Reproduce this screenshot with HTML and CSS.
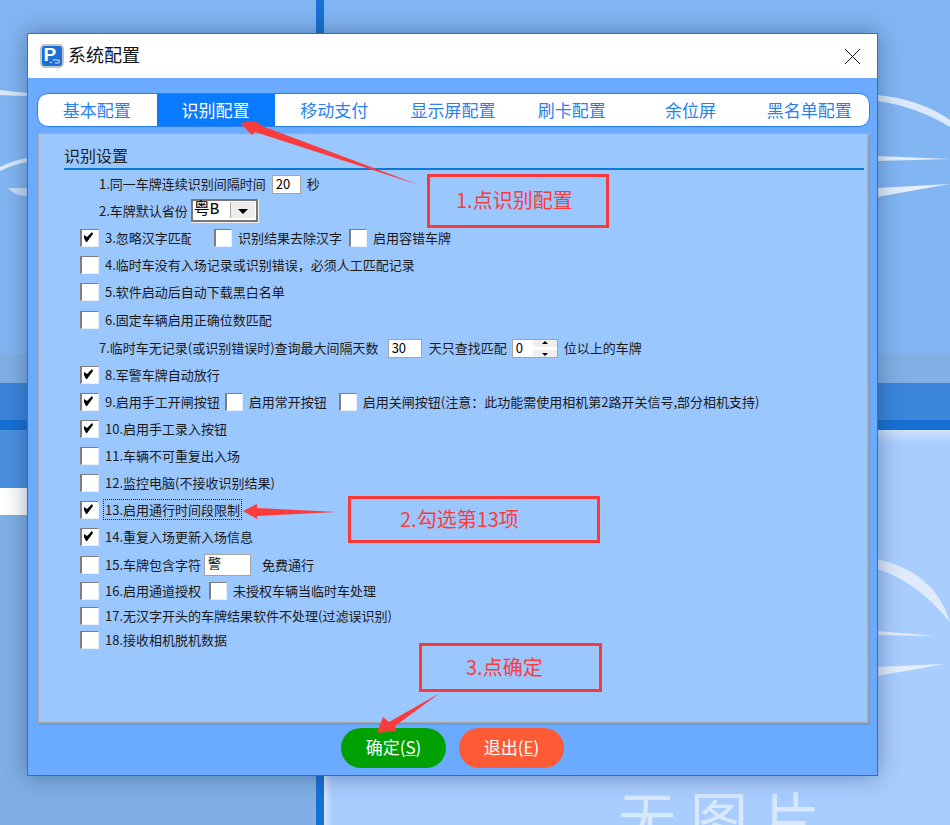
FILE: index.html
```html
<!DOCTYPE html>
<html lang="zh-CN">
<head>
    <meta charset="utf-8">
    <title>系统配置</title>
    <link rel="stylesheet" href="styles.css">
</head>
<body>

    <div class="desktop">
        <div class="back-col back-left">
            <div class="band band-sky"></div>
            <div class="band band-pale"></div>
            <div class="band band-blue"></div>
            <div class="band band-deep"></div>
            <div class="band band-mid"></div>
            <div class="band band-white"></div>
            <div class="band band-rest"></div>
        </div>
        <div class="back-bar"></div>
        <div class="back-col back-right">
            <div class="band band-sky"></div>
            <div class="band band-pale"></div>
            <div class="band band-blue"></div>
            <div class="band band-deep"></div>
            <div class="band band-light"></div>
        </div>
    </div>

    <svg class="streaks" width="950" height="825" viewBox="0 0 950 825">
        <path d="M0 90 Q14 92 28 93 L28 96 Q14 96 0 95 Z" fill="#dbe9fb"/>
        <path d="M0 167 Q14 160 28 158 L28 162 Q14 164 0 171 Z" fill="#dbe9fb"/>
        <path d="M8 188 L28 188 L28 196 Q16 197 8 188 Z" fill="#c6dcf8"/>
        <path d="M877 95 Q920 99 950 120 L950 127 Q915 106 877 101 Z" fill="#dce9fb"/>
        <path d="M877 156 L950 159 L877 161 Z" fill="#e4eefc"/>
        <path d="M877 188 L950 184 L877 197 Z" fill="#e4eefc"/>
        <path d="M877 559 Q935 572 950 622 Q915 580 877 569 Z" fill="#dfebfc"/>
        <path d="M877 631 L937 636 L877 635 Z" fill="#e4eefc"/>
        <path d="M877 667 L945 664 L877 676 Z" fill="#e4eefc"/>
    </svg>
    <div class="no-image">无图片</div>

    <div class="dialog">
        <div class="title-bar">
            <svg class="logo" width="24" height="24" viewBox="0 0 24 24">
                <rect x="1" y="1" width="22" height="22" rx="4" fill="#1b6fd6" stroke="#c4c4c4" stroke-width="2"/>
                <text x="3.5" y="17" class="logo-letter">P</text>
                <path d="M10 18.5 h2 M13 16 h6 q1 1 0 3 h-4" fill="none" stroke="#d5e6fb" stroke-width="1"/>
            </svg>
            <span class="title-text">系统配置</span>
            <svg class="close-icon" width="17" height="17" viewBox="0 0 17 17">
                <path d="M1 1 L16 16 M16 1 L1 16" stroke="#111" stroke-width="1" fill="none"/>
            </svg>
        </div>

        <div class="tabs">
            <div class="tab">基本配置</div>
            <div class="tab active">识别配置</div>
            <div class="tab">移动支付</div>
            <div class="tab">显示屏配置</div>
            <div class="tab">刷卡配置</div>
            <div class="tab">余位屏</div>
            <div class="tab">黑名单配置</div>
        </div>

        <div class="panel">
            <div class="panel-title">识别设置</div>

            <div class="row row-plain">
                <span>1.同一车牌连续识别间隔时间</span>
                <span class="field field-sec">20</span>
                <span>秒</span>
            </div>
            <div class="row row-plain">
                <span>2.车牌默认省份</span>
                <span class="select"><span class="select-value">粤B</span><span class="select-btn"></span></span>
            </div>
            <div class="row">
                <span class="cb checked"></span><span class="clipped">3.忽略汉字匹配</span>
                <span class="cb cb-small push-17"></span><span>识别结果去除汉字</span>
                <span class="cb cb-small push-1"></span><span>启用容错车牌</span>
            </div>
            <div class="row"><span class="cb"></span><span>4.临时车没有入场记录或识别错误，必须人工匹配记录</span></div>
            <div class="row"><span class="cb"></span><span>5.软件启动后自动下载黑白名单</span></div>
            <div class="row row-gap-4"><span class="cb"></span><span>6.固定车辆启用正确位数匹配</span></div>
            <div class="row row-plain row-gap-4">
                <span>7.临时车无记录(或识别错误时)查询最大间隔天数</span>
                <span class="field field-days">30</span>
                <span>天只查找匹配</span>
                <span class="spinner">0<span class="spin-btns"><span class="spin-up"></span><span class="spin-down"></span></span></span>
                <span>位以上的车牌</span>
            </div>
            <div class="row"><span class="cb checked"></span><span>8.军警车牌自动放行</span></div>
            <div class="row">
                <span class="cb checked"></span><span>9.启用手工开闸按钮</span>
                <span class="cb cb-small push-n1"></span><span>启用常开按钮</span>
                <span class="cb cb-small push-6"></span><span>启用关闸按钮(注意：此功能需使用相机第2路开关信号,部分相机支持)</span>
            </div>
            <div class="row"><span class="cb checked"></span><span>10.启用手工录入按钮</span></div>
            <div class="row"><span class="cb"></span><span>11.车辆不可重复出入场</span></div>
            <div class="row"><span class="cb"></span><span>12.监控电脑(不接收识别结果)</span></div>
            <div class="row"><span class="cb checked"></span><span class="focused">13.启用通行时间段限制</span></div>
            <div class="row"><span class="cb checked"></span><span>14.重复入场更新入场信息</span></div>
            <div class="row row-gap-4">
                <span class="cb"></span><span>15.车牌包含字符</span>
                <span class="field field-char">警</span>
                <span>免费通行</span>
            </div>
            <div class="row row-gap-2">
                <span class="cb"></span><span>16.启用通道授权</span>
                <span class="cb cb-small push-2"></span><span>未授权车辆当临时车处理</span>
            </div>
            <div class="row row-gap-1"><span class="cb"></span><span>17.无汉字开头的车牌结果软件不处理(过滤误识别)</span></div>
            <div class="row row-gap-0"><span class="cb"></span><span>18.接收相机脱机数据</span></div>
        </div>

        <div class="footer">
            <button class="btn btn-ok">确定(<u>S</u>)</button>
            <button class="btn btn-exit">退出(<u>E</u>)</button>
        </div>
    </div>

    <div class="note note-one">1.点识别配置</div>
    <div class="note note-two">2.勾选第13项</div>
    <div class="note note-three">3.点确定</div>

    <svg class="arrows" width="950" height="825" viewBox="0 0 950 825">
        <polygon points="240,123 255,121 262,126 419,185 255,132 252,135"/>
        <polygon points="243,511 257,504 257,508 337,512 257,516 257,519"/>
        <polygon points="377,733 383,717 389,722 440,693 395,726 396,731"/>
    </svg>

</body>
</html>
```

FILE: styles.css
```css
* {
    box-sizing: border-box;
}

body {
    margin: 0;
    width: 950px;
    height: 825px;
    overflow: hidden;
    position: relative;
    font-family: "Noto Sans CJK SC", "Noto Sans", sans-serif;
    font-size: 13px;
    color: #1a1a1a;
    background: #82b6f2;
}

/* windows behind the dialog */
.desktop {
    position: absolute;
    inset: 0;
    display: flex;
}

.back-col {
    display: flex;
    flex-direction: column;
}

.back-left {
    width: 316px;
}

.back-right {
    flex: 1;
}

.back-bar {
    width: 8px;
    background: #1670d3;
}

.band-sky {
    height: 353px;
    background: #82b6f2;
}

.band-pale {
    height: 30px;
    background: #80b0e4;
}

.band-blue {
    height: 37px;
    background: #3b85db;
}

.band-deep {
    height: 10px;
    background: #1670d3;
}

.band-mid {
    height: 58px;
    background: #4a90de;
}

.band-white {
    height: 27px;
    background: #ffffff;
}

.band-rest {
    flex: 1;
    background: #7fafe4;
}

.band-light {
    flex: 1;
    background:
        linear-gradient(90deg, #d6e6fd 0, rgba(214, 230, 253, 0) 8px),
        linear-gradient(180deg, #cfe2fd 0, #a9cdff 14px);
}

.streaks {
    position: absolute;
    left: 0;
    top: 0;
}

.no-image {
    position: absolute;
    left: 618px;
    top: 776px;
    font-size: 58px;
    letter-spacing: 14px;
    line-height: 80px;
    color: #d8e8fd;
}

/* dialog */
.dialog {
    position: absolute;
    left: 27px;
    top: 33px;
    width: 851px;
    height: 743px;
    display: flex;
    flex-direction: column;
    background: #6aabff;
    border: 1px solid #4d6a8d;
    box-shadow: 0 0 22px rgba(30, 50, 90, 0.45);
}

.title-bar {
    height: 44px;
    flex: none;
    display: flex;
    align-items: center;
    padding: 0 16px 0 12px;
    background: #ffffff;
}

.logo {
    flex: none;
}

.logo-letter {
    font-family: "Liberation Sans", sans-serif;
    font-size: 19px;
    font-weight: 700;
    fill: #ffffff;
}

.title-text {
    margin-left: 4px;
    padding-bottom: 4px;
    font-size: 18px;
    color: #111;
}

.close-icon {
    margin-left: auto;
}

.tabs {
    display: flex;
    flex: none;
    height: 34px;
    width: 833px;
    margin: 15px 0 0 9px;
    overflow: hidden;
    background: #ffffff;
    border: 1px solid #2a7ff0;
    border-radius: 11px;
}

.tab {
    flex: 1;
    display: flex;
    align-items: center;
    justify-content: center;
    padding: 0 1px 2px 0;
    font-size: 17px;
    color: #2a80f0;
}

.tab.active {
    background: #0a7aff;
    color: #ffffff;
}

.panel {
    flex: none;
    width: 831px;
    height: 590px;
    margin: 6px 0 0 10px;
    background: #9bc7ff;
    border: 1px solid #a8a8a8;
    border-right-width: 2px;
    box-shadow: 1px 2px 0 #5f9fee;
}

.panel-title {
    height: 36px;
    margin: 0 3px 0 25px;
    padding-top: 9px;
    font-size: 16px;
    line-height: 24px;
    color: #222;
    border-bottom: 2px solid #0b78d8;
}

.row {
    display: flex;
    align-items: center;
    gap: 6px;
    height: 24px;
    margin-top: 3px;
    padding: 0 0 4px 41px;
    white-space: nowrap;
}

.row-plain {
    padding-left: 60px;
}

.row-gap-4 {
    margin-top: 4px;
}

.row-gap-2 {
    margin-top: 2px;
}

.row-gap-1 {
    margin-top: 1px;
}

.row-gap-0 {
    margin-top: 0;
}

.clipped {
    width: 86px;
    overflow: hidden;
}

/* checkbox with the sunken look of the old control */
.cb {
    position: relative;
    flex: none;
    width: 19px;
    height: 18px;
    margin-top: 2px;
    background: #ffffff;
    border-top: 1px solid #7e7e7e;
    border-left: 2px solid #7e7e7e;
    border-right: 1px solid #e6eefb;
    border-bottom: 1px solid #e6eefb;
}

.cb-small {
    width: 18px;
}

.cb.checked::after {
    content: "";
    position: absolute;
    inset: 0;
    background: #000;
    clip-path: polygon(2px 5px, 5px 7px, 10px 2px, 11px 4px, 5px 12px, 4px 12px, 2px 8px);
}

.push-17 {
    margin-left: 17px;
}

.push-6 {
    margin-left: 6px;
}

.push-2 {
    margin-left: 2px;
}

.push-1 {
    margin-left: 1px;
}

.push-n1 {
    margin-left: -1px;
}

.focused {
    margin-left: -1px;
    padding: 0 1px;
    outline: 1px dotted #222;
}

.field {
    flex: none;
    height: 19px;
    margin-top: 2px;
    padding-left: 3px;
    line-height: 16px;
    background: #ffffff;
    border: 1px solid #a4a4a4;
    color: #000;
}

.field-sec {
    width: 29px;
}

.field-days {
    width: 34px;
    margin: 2px 1px 0 3px;
}

.field-char {
    width: 47px;
    height: 22px;
    margin: 2px 5px 0 -3px;
}

.select {
    display: flex;
    width: 68px;
    height: 24px;
    margin: 2px 0 0 -3px;
    background: #ffffff;
    border-right: 1px solid #f2f2f2;
    border-bottom: 1px solid #f2f2f2;
    box-shadow: inset 0 0 0 2px #777;
}

.select-value {
    flex: 1;
    padding: 1px 0 0 3px;
    font-family: "Liberation Mono", "Noto Sans CJK SC", monospace;
    font-size: 16px;
    line-height: 20px;
    color: #000;
}

.select-btn {
    position: relative;
    width: 25px;
    margin: 3px 3px 4px 0;
    background: #ececec;
    border-left: 1px solid #aaa;
}

.select-btn::after {
    content: "";
    position: absolute;
    left: 7px;
    top: 7px;
    border-left: 5px solid transparent;
    border-right: 5px solid transparent;
    border-top: 5px solid #000;
}

.spinner {
    flex: none;
    display: flex;
    justify-content: space-between;
    width: 46px;
    height: 19px;
    margin: 2px 0 0 -1px;
    padding-left: 3px;
    line-height: 16px;
    background: #ffffff;
    border: 1px solid #a4a4a4;
    color: #000;
}

.spin-btns {
    display: flex;
    flex-direction: column;
    justify-content: space-between;
    width: 24px;
}

.spin-up,
.spin-down {
    position: relative;
    height: 7px;
    background: #efefef;
}

.spin-up::after,
.spin-down::after {
    content: "";
    position: absolute;
    left: 9px;
    border-left: 3px solid transparent;
    border-right: 3px solid transparent;
}

.spin-up::after {
    top: 1px;
    border-bottom: 3px solid #000;
}

.spin-down::after {
    top: 3px;
    border-top: 3px solid #000;
}

.footer {
    display: flex;
    justify-content: center;
    gap: 13px;
    margin-top: 5px;
}

.btn {
    width: 105px;
    height: 40px;
    padding: 0 0 3px;
    border: none;
    border-radius: 20px;
    font-family: inherit;
    font-size: 17px;
    color: #ffffff;
}

.btn-ok {
    background: #00a000;
}

.btn-exit {
    background: #ff5a36;
}

/* red annotations drawn over the screenshot */
.note {
    position: absolute;
    display: flex;
    align-items: center;
    padding-bottom: 3px;
    font-size: 20px;
    color: #fa3c3c;
    border: 3px solid #fa3838;
}

.note-one {
    left: 427px;
    top: 174px;
    width: 182px;
    height: 54px;
    padding-left: 26px;
}

.note-two {
    left: 348px;
    top: 496px;
    width: 252px;
    height: 47px;
    padding-left: 49px;
}

.note-three {
    left: 419px;
    top: 643px;
    width: 183px;
    height: 49px;
    padding-left: 44px;
}

.arrows {
    position: absolute;
    left: 0;
    top: 0;
    fill: #fa3c3c;
}
```
